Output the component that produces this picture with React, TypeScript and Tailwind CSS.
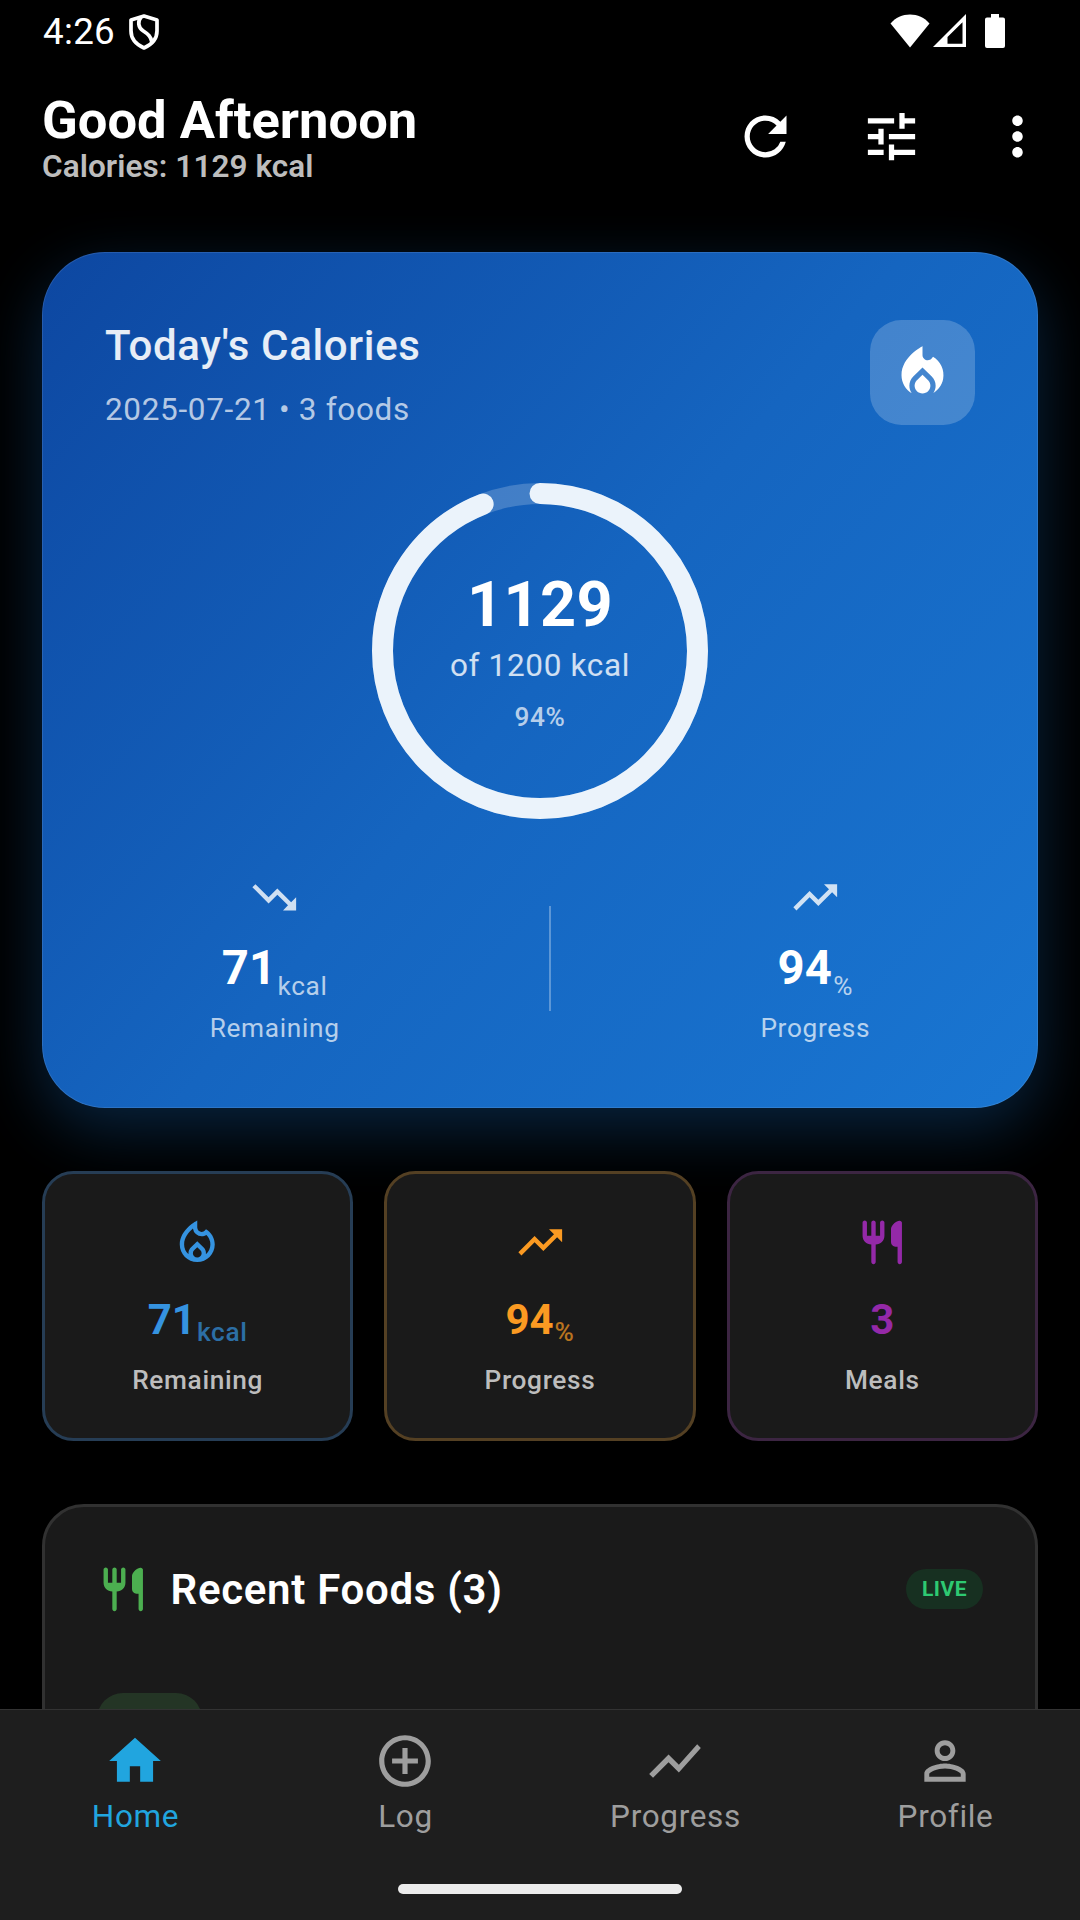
import React from 'react';
import {
    MdAddCircleOutline,
    MdHome,
    MdLocalFireDepartment,
    MdMoreVert,
    MdOutlineLocalFireDepartment,
    MdPersonOutline,
    MdRefresh,
    MdShowChart,
    MdTrendingDown,
    MdTrendingUp,
    MdTune,
} from 'react-icons/md';

const EATEN = 1129;
const GOAL = 1200;

const RestaurantIcon: React.FC<{ className?: string }> = ({ className }) => (
    <svg viewBox="0 0 24 24" fill="currentColor" className={className}>
        <path d="M16 6v6c0 1.1.9 2 2 2h1v7c0 .55.45 1 1 1s1-.45 1-1V3.13c0-.65-.61-1.13-1.24-.98C17.6 2.68 16 4.51 16 6zm-5 3H9V3c0-.55-.45-1-1-1s-1 .45-1 1v6H5V3c0-.55-.45-1-1-1s-1 .45-1 1v6c0 2.21 1.79 4 4 4v8c0 .55.45 1 1 1s1-.45 1-1v-8c2.21 0 4-1.79 4-4V3c0-.55-.45-1-1-1s-1 .45-1 1v6z" />
    </svg>
);

const StatusBar: React.FC = () => (
    <div className="flex h-[63px] shrink-0 items-start justify-between pl-[43px] pr-[75px] pt-[10px]">
        <div className="flex items-start">
            <span className="pt-px text-[36.75px] leading-[42px] tracking-[0.3px]">4:26</span>
            <svg viewBox="0 0 30 36" fill="none" stroke="white" strokeWidth="3.7" strokeLinejoin="round" className="ml-[14px] mt-[4px] h-[36px] w-[30px]">
                <path d="M15 2 28 6v11c0 7.5-5.4 13.6-13 17C7.4 30.6 2 24.5 2 17V6z" />
                <path d="M12 3C8.5 7.500 9 13.500 14 16.800c5.500 3.600 8 5.700 8.800 11.200" />
            </svg>
        </div>
        <div className="flex items-start pt-[4px]">
            <svg viewBox="0 0 40 34" fill="white" className="h-[34px] w-[40px]">
                <path d="M20 33.500.500 9.500C5.500 3.500 12.500.500 20 .500s14.500 3 19.500 9z" />
            </svg>
            <svg viewBox="0 0 33 33" className="ml-[3px] h-[33px] w-[33px]">
                <path fill="white" fillRule="evenodd" d="M0 33 33 0v33zM14.500 29.700h15V8.300l-15 14.800z" />
            </svg>
            <svg viewBox="0 0 20 34" fill="white" className="ml-[19px] h-[34px] w-[20px]">
                <path d="M6 0h8v3.500h4a2 2 0 0 1 2 2V32a2 2 0 0 1-2 2H2a2 2 0 0 1-2-2V5.500a2 2 0 0 1 2-2h4z" />
            </svg>
        </div>
    </div>
);

const Header: React.FC = () => (
    <header className="flex h-[147px] shrink-0 items-center justify-between pl-[42px]">
        <div className="pt-[2px]">
            <h1 className="text-[52.5px] font-bold leading-[58px]">Good Afternoon</h1>
            <p className="text-[31.5px] font-semibold leading-[36px] tracking-[0.07px] text-[#bdbdbd]">Calories: {EATEN} kcal</p>
        </div>
        <div className="flex">
            {[MdRefresh, MdTune, MdMoreVert].map((Icon, i) => (
                <button key={i} className="flex size-[126px] items-center justify-center">
                    <Icon className="size-[63px]" />
                </button>
            ))}
        </div>
    </header>
);

const CalorieRing: React.FC = () => {
    const r = 157.5;
    const length = 2 * Math.PI * r;
    return (
        <div className="relative mx-auto mt-[52px] flex size-[336px] flex-col items-center justify-center pt-[2px]">
            <svg viewBox="0 0 336 336" fill="none" strokeWidth="21" className="absolute inset-0 -rotate-90">
                <circle cx="168" cy="168" r={r} stroke="white" strokeOpacity="0.2" />
                <circle
                    cx="168"
                    cy="168"
                    r={r}
                    stroke="#ebf3fb"
                    strokeLinecap="round"
                    strokeDasharray={`${(length * EATEN) / GOAL} ${length}`}
                />
            </svg>
            <span className="text-[63px] font-bold leading-[74px] tracking-[0.3px]">{EATEN}</span>
            <span className="mt-[2px] text-[31.5px] leading-[44px] tracking-[0.66px] text-white/80">of {GOAL} kcal</span>
            <span className="mt-[10px] text-[26.25px] font-medium leading-[38px] tracking-[0.6px] text-white/70">94%</span>
        </div>
    );
};

interface StatProps {
    icon: React.ReactNode;
    value: string;
    unit: string;
    label: string;
}

const Stat: React.FC<StatProps> = ({ icon, value, unit, label }) => (
    <div className="flex flex-col items-center">
        <div className="text-[52.5px] text-white/80">{icon}</div>
        <div className="mt-[16px] flex items-end">
            <span className="text-[47.25px] font-bold leading-[56px] tracking-[0.3px]">{value}</span>
            <span className="ml-px text-[26.25px] leading-[19px] tracking-[0.66px] text-white/70">{unit}</span>
        </div>
        <span className="mt-[13px] text-[26.25px] leading-[38px] tracking-[0.66px] text-white/70">{label}</span>
    </div>
);

const TodayCard: React.FC = () => (
    <section className="h-[855.5px] shrink-0 rounded-[63px] bg-[linear-gradient(130.65deg,#0d47a1,#1565c0_50%,#1976d2)] px-[63px] pt-[63px] shadow-[0_21px_63px_rgba(25,118,210,0.3),inset_0_0_0_1px_rgba(255,255,255,0.1)]">
        <div className="flex h-[115.5px] items-center justify-between">
            <div className="pt-[2px]">
                <h2 className="text-[42px] font-medium leading-[60px] tracking-[0.66px] text-white/90">Today's Calories</h2>
                <p className="mt-[11.5px] text-[31.5px] leading-[44px] tracking-[0.66px] text-white/70">2025-07-21 • 3 foods</p>
            </div>
            <div className="flex size-[105px] items-center justify-center rounded-[31.5px] bg-white/20">
                <MdLocalFireDepartment className="size-[63px]" />
            </div>
        </div>
        <CalorieRing />
        <div className="mt-[52.5px] flex items-center justify-around">
            <Stat icon={<MdTrendingDown />} value="71" unit="kcal" label="Remaining" />
            <div className="h-[105px] w-[2px] bg-white/30" />
            <Stat icon={<MdTrendingUp />} value="94" unit="%" label="Progress" />
        </div>
    </section>
);

const tiles = [
    {
        icon: <MdOutlineLocalFireDepartment className="size-[52.5px]" />,
        value: '71',
        unit: 'kcal',
        label: 'Remaining',
        color: 'text-[#3593e0]',
        border: 'border-[#263d55]',
    },
    {
        icon: <MdTrendingUp className="size-[52.5px]" />,
        value: '94',
        unit: '%',
        label: 'Progress',
        color: 'text-[#fb9a22]',
        border: 'border-[#544023]',
    },
    {
        icon: <RestaurantIcon className="size-[52.5px]" />,
        value: '3',
        unit: '',
        label: 'Meals',
        color: 'text-[#9429a8]',
        border: 'border-[#3c2542]',
    },
];

const navItems = [
    { label: 'Home', icon: MdHome, color: 'text-[#21a5df]' },
    { label: 'Log', icon: MdAddCircleOutline, color: 'text-[#9e9e9e]' },
    { label: 'Progress', icon: MdShowChart, color: 'text-[#9e9e9e]' },
    { label: 'Profile', icon: MdPersonOutline, color: 'text-[#9e9e9e]' },
];

const RecentFoods: React.FC = () => (
    <section className="mt-[63px] h-[500px] shrink-0 rounded-[42px] border-[3px] border-[#313131] bg-[#1a1a1a] px-[52px] pt-[52px]">
        <div className="flex h-[61px] items-center">
            <RestaurantIcon className="size-[52.5px] text-[#4caf50]" />
            <h2 className="ml-[21px] pt-[2px] text-[42px] font-semibold leading-[50px] tracking-[0.7px]">Recent Foods (3)</h2>
            <span className="ml-auto rounded-[21px] bg-[#173021] px-[16px] text-[21px] font-bold leading-[40px] tracking-[0.5px] text-[#2ec972]">
                LIVE
            </span>
        </div>
        <div className="mt-[73px] size-[105px] rounded-[26px] bg-[#243525]" />
    </section>
);

export default function App() {
    return (
        <div className="flex h-[1920px] w-[1080px] flex-col overflow-hidden bg-black font-['Roboto',sans-serif] text-white">
            <StatusBar />
            <Header />
            <main className="flex flex-1 flex-col overflow-hidden px-[42px] pt-[42px]">
                <TodayCard />
                <div className="mt-[63px] grid shrink-0 grid-cols-3 gap-[31px]">
                    {tiles.map(tile => (
                        <div key={tile.label} className={`flex h-[270px] flex-col items-center rounded-[31.5px] border-[3px] bg-[#1a1a1a] pt-[42px] ${tile.border} ${tile.color}`}>
                            {tile.icon}
                            <div className="mt-[27px] flex items-end">
                                <span className="text-[42px] font-bold leading-[50px]">{tile.value}</span>
                                {tile.unit && (
                                    <span className="ml-px text-[26.25px] font-medium leading-[26px] tracking-[0.66px] opacity-70">{tile.unit}</span>
                                )}
                            </div>
                            <span className="mt-[16px] text-[26.25px] font-medium leading-[38px] tracking-[0.66px] text-[#bdbdbd]">{tile.label}</span>
                        </div>
                    ))}
                </div>
                <RecentFoods />
            </main>
            <nav className="flex h-[211px] shrink-0 flex-col items-center border-t border-[#333333] bg-[#1e1e1e] pt-[20px]">
                <div className="grid w-full grid-cols-4">
                    {navItems.map(({ label, icon: Icon, color }) => (
                        <div key={label} className={`flex flex-col items-center ${color}`}>
                            <Icon className="size-[62px]" />
                            <span className="mt-[3px] pl-px text-[31.5px] leading-[44px] tracking-[0.66px]">{label}</span>
                        </div>
                    ))}
                </div>
                <div className="mt-[45px] h-[10px] w-[284px] rounded-full bg-[#ececec]" />
            </nav>
        </div>
    );
}
